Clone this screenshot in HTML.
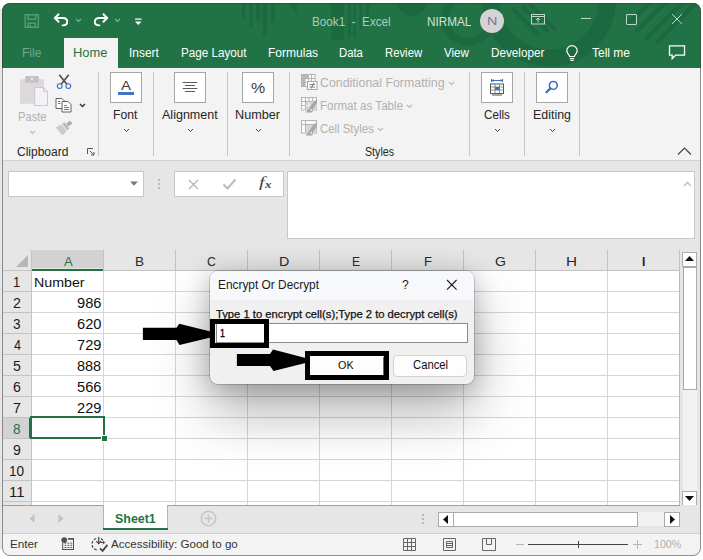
<!DOCTYPE html>
<html lang="en">
<head>
<meta charset="utf-8">
<title>Book1 - Excel</title>
<style>
html,body{margin:0;padding:0;background:#fff;}
body{width:703px;height:560px;position:relative;overflow:hidden;font-family:"Liberation Sans",sans-serif;}
#win{position:absolute;left:2px;top:3px;width:699px;height:552.5px;border-radius:8px;overflow:hidden;background:#e6e6e6;}
#o{position:absolute;left:-2px;top:-3px;width:703px;height:560px;}
#o div,#o svg,#o span{position:absolute;}
.t{white-space:pre;line-height:1;transform-origin:0 0;}
#frame{position:absolute;left:2px;top:3px;width:697px;height:550.5px;border-radius:8px;border:1px solid rgba(60,60,60,.55);pointer-events:none;}
.sep{width:1px;background:#c6c6c6;top:72px;height:84px;}
.bigbtn{width:30px;height:28.5px;top:72px;border:1px solid #a6a6a6;background:#fff;box-sizing:content-box;}
.gl{background:#d4d4d4;}
.hl{background:#c3c3c3;}
</style>
</head>
<body>
<div style="position:absolute;left:0;top:9px;width:3px;height:540px;background:#e6e6e6;"></div>
<div id="win"><div id="o">

<!-- ===== title + tabs ===== -->
<div id="titlebar" style="left:0;top:0;width:703px;height:68px;background:#217346;"></div>
<svg id="titlepattern" style="left:0;top:0;" width="703" height="68" viewBox="0 0 703 68">
 <g fill="#1d693f">
  <rect x="242" y="3" width="3" height="15.500"/><rect x="249.300" y="3" width="3" height="24"/><rect x="256" y="3" width="4" height="18"/><rect x="262.700" y="3" width="4.300" height="32.500"/><rect x="271" y="3" width="4" height="19.700"/>
  <path d="M288 3h9v10z"/>
  <rect x="331" y="3" width="13" height="37"/><rect x="348" y="3" width="3" height="34"/><rect x="353.500" y="3" width="2.500" height="34"/><rect x="359.500" y="3" width="2.800" height="27"/><rect x="366" y="3" width="3.400" height="23"/>
  <circle cx="412" cy="2" r="14"/>
 </g>
 <g fill="none" stroke="#1d693f">
  <circle cx="468" cy="19" r="23" stroke-width="8"/>
  <circle cx="549" cy="-0.500" r="58.500" stroke-width="17"/>
  <path d="M626 26L651 1M636 32L666 2M646 39L685 0M656 43L700 -1" stroke-width="4.500"/><path d="M522 6L548 32M512 8L540 36M530 4L556 30" stroke-width="4"/>
 </g>
</svg>
<div id="hometab" style="left:64px;top:38px;width:53.5px;height:30px;background:#f3f3f3;"></div>

<!-- quick access icons -->
<svg style="left:24px;top:13px;" width="16" height="16" viewBox="0 0 16 16" fill="none" stroke="#559a73" stroke-width="1.500"><path d="M1.2 1.7h13.1v12.6H1.2z"/><path d="M4 1.7v4.6h7.5V1.7"/><path d="M4.3 14.3v-4h7v4M6.5 14.3v-2.2"/></svg>
<svg style="left:53px;top:12px;" width="17" height="16" viewBox="0 0 17 16" fill="none" stroke="#fff" stroke-width="1.9" stroke-linecap="round" stroke-linejoin="round"><path d="M5.6 2.3L1.8 6l3.8 3.7"/><path d="M2.2 6h7.6c2.7 0 4.4 1.6 4.4 3.7 0 2.200-1.700 3.700-4.600 3.700"/></svg>
<svg style="left:91.500px;top:12px;" width="17" height="16" viewBox="0 0 17 16" fill="none" stroke="#fff" stroke-width="1.9" stroke-linecap="round" stroke-linejoin="round"><path d="M11.4 2.3L15.200 6l-3.800 3.700"/><path d="M14.800 6H7.200C4.500 6 2.800 7.600 2.800 9.700c0 2.200 1.700 3.700 4.600 3.700"/></svg>
<svg style="left:75px;top:17.700px;" width="7" height="5" viewBox="0 0 7 5" fill="none" stroke="#7fb396" stroke-width="1.1"><path d="M1 1l2.500 2.500L6 1"/></svg>
<svg style="left:114px;top:17.700px;" width="7" height="5" viewBox="0 0 7 5" fill="none" stroke="#7fb396" stroke-width="1.1"><path d="M1 1l2.500 2.500L6 1"/></svg>
<svg style="left:134px;top:16.500px;" width="9" height="9" viewBox="0 0 9 9" fill="#fff"><rect x="1" y="1.500" width="6.500" height="1.200"/><path d="M1 4.500h6.500L4.250 7.900z"/></svg>

<!-- window controls -->
<div style="left:480px;top:9px;width:24px;height:24px;border-radius:12px;background:#d5d3d6;"></div>
<svg style="left:531px;top:13px;" width="14" height="12" viewBox="0 0 14 12" fill="none" stroke="#bcd8c9" stroke-width="1"><rect x="0.500" y="1.500" width="13" height="9.500"/><path d="M0.500 3.500h13M7 9.500V5.300M5 7l2-2 2 2"/></svg>
<div style="left:581px;top:18px;width:10px;height:1px;background:#bcd8c9;"></div>
<div style="left:626px;top:14px;width:9px;height:9px;border:1px solid #bcd8c9;border-radius:1px;"></div>
<svg style="left:671px;top:13px;" width="12" height="12" viewBox="0 0 12 12" stroke="#bcd8c9" stroke-width="1"><path d="M1 1l10 10M11 1L1 11"/></svg>
<!-- lightbulb -->
<svg style="left:565px;top:45px;" width="14" height="17" viewBox="0 0 14 17" fill="none" stroke="#fff" stroke-width="1.2"><path d="M4.600 11.500c0-1.700-2.800-2.900-2.800-5.700a5.200 5.200 0 0110.400 0c0 2.800-2.800 4-2.800 5.700z"/><path d="M4.800 13.600h4.400M5.300 15.500h3.400"/></svg>
<!-- comment -->
<svg style="left:668px;top:44px;" width="18" height="17" viewBox="0 0 18 17" fill="none" stroke="#fff" stroke-width="1.300"><path d="M1.500 1.800h15v9.400H7.500l-3.300 3.500v-3.500H1.500z"/></svg>

<!-- ===== ribbon ===== -->
<div id="ribbon" style="left:0;top:68px;width:703px;height:92px;background:#f3f3f3;"></div>
<div style="left:0;top:160px;width:703px;height:1px;background:#d2d2d2;"></div>
<div class="sep" style="left:98px;"></div>
<div class="sep" style="left:153px;"></div>
<div class="sep" style="left:227px;"></div>
<div class="sep" style="left:289px;"></div>
<div class="sep" style="left:469px;"></div>
<div class="sep" style="left:524px;"></div>
<div class="sep" style="left:579px;"></div>

<!-- paste -->
<svg style="left:18px;top:75px;" width="32" height="34" viewBox="0 0 32 34"><rect x="2" y="4.300" width="24" height="24.400" rx="1.500" fill="#dcd8dc"/><rect x="7.200" y="1" width="13.700" height="6.800" rx="1" fill="#c4c0c4"/><circle cx="13.900" cy="3.900" r="1.300" fill="#ece9ec"/><path d="M16.700 12.500h8.800l4 4v14h-12.800z" fill="#f5f2f7" stroke="#cbc7cc" stroke-width="1"/><path d="M25.500 12.500v4h4" fill="none" stroke="#cbc7cc" stroke-width="1"/></svg>
<svg style="left:29px;top:130px;" width="7" height="5" viewBox="0 0 7 5" fill="none" stroke="#b9b9b9" stroke-width="1.100"><path d="M1 1l2.500 2.500L6 1"/></svg>
<!-- scissors -->
<svg style="left:56px;top:74px;" width="16" height="16" viewBox="0 0 16 16" fill="none"><path d="M3.300 0.800L11 10.600M12.700 0.800L5 10.600" stroke="#505050" stroke-width="1.600"/><circle cx="3.700" cy="12.100" r="2.400" stroke="#3b6fc0" stroke-width="1.100"/><circle cx="12.300" cy="12.100" r="2.400" stroke="#3b6fc0" stroke-width="1.100"/></svg>
<!-- copy -->
<svg style="left:55px;top:97px;" width="17" height="16" viewBox="0 0 17 16" fill="#fff" stroke="#555" stroke-width="0.900"><path d="M1 1.500h6l2.500 2.500v7.500H1z"/><path d="M7 4.500h6l3 3v7.500H7z"/><path d="M9 8.500h3M9 10.500h5M9 12.500h5M3 4.500h2.500M3 6.500h2.500" stroke="#3b6fc0"/></svg>
<svg style="left:78.500px;top:103px;" width="7" height="5" viewBox="0 0 7 5" fill="none" stroke="#333" stroke-width="1.400"><path d="M1 1l2.500 2.500L6 1"/></svg>
<!-- format painter -->
<svg style="left:56px;top:119px;" width="18" height="16" viewBox="0 0 18 16"><g transform="rotate(-38 9 8)"><rect x="12" y="6" width="5" height="3.800" rx="0.800" fill="#b3afb3"/><rect x="8.800" y="4" width="2.800" height="7.800" fill="#bab6ba"/><path d="M8 3.600v8.600L1.500 13.200V2.600z" fill="#cfcbcf"/></g></svg>
<!-- launcher -->
<svg style="left:87px;top:148px;" width="8" height="8" viewBox="0 0 8 8" fill="none" stroke="#555" stroke-width="1"><path d="M0.500 6V0.500H6"/><path d="M2.800 2.800l4 4M7 4v3H4"/></svg>

<!-- big buttons -->
<div class="bigbtn" style="left:110px;"></div>
<div style="left:118px;top:91.500px;width:16px;height:3.500px;background:#4472c4;"></div>
<div class="bigbtn" style="left:174px;"></div>
<svg style="left:182px;top:81px;" width="16" height="13" viewBox="0 0 16 13" stroke="#5a5a5a" stroke-width="1"><path d="M0.700 1.500h14.600M3 4.500h10M0.700 7.500h14.600M3 10.500h10"/></svg>
<div class="bigbtn" style="left:242px;"></div>
<div class="bigbtn" style="left:481px;"></div>
<div class="bigbtn" style="left:536px;"></div>
<!-- cells icon -->
<svg style="left:489px;top:78px;" width="16" height="18" viewBox="0 0 16 18" fill="none"><path d="M2.500 1v3M13.500 1v3M2.500 2.500h11" stroke="#3b6fc0" stroke-width="1"/><path d="M4.500 1l-2 1.500 2 1.500zM11.500 1l2 1.500-2 1.500z" fill="#3b6fc0"/><rect x="1.500" y="6" width="13" height="9.500" fill="#fff" stroke="#555" stroke-width="1"/><path d="M1.500 9h13M1.500 12h13M6 6v9.500M10.500 6v9.500" stroke="#777" stroke-width="0.800"/><rect x="6" y="9" width="4.500" height="3" fill="#3b6fc0"/><path d="M3 17h10" stroke="#555" stroke-width="1"/></svg>
<!-- magnifier -->
<svg style="left:545px;top:80px;" width="14" height="14" viewBox="0 0 14 14" fill="none" stroke="#3b6fc0"><circle cx="8.300" cy="5.400" r="3.900" stroke-width="1.600"/><path d="M5.400 8.400L1.500 12.300" stroke-width="2.200" stroke-linecap="round"/></svg>
<!-- chevrons under labels -->
<svg style="left:122.500px;top:128px;" width="7" height="5" viewBox="0 0 7 5" fill="none" stroke="#444" stroke-width="1"><path d="M1 1l2.500 2.500L6 1"/></svg>
<svg style="left:186.500px;top:128px;" width="7" height="5" viewBox="0 0 7 5" fill="none" stroke="#444" stroke-width="1"><path d="M1 1l2.500 2.500L6 1"/></svg>
<svg style="left:254.500px;top:128px;" width="7" height="5" viewBox="0 0 7 5" fill="none" stroke="#444" stroke-width="1"><path d="M1 1l2.500 2.500L6 1"/></svg>
<svg style="left:493.500px;top:128px;" width="7" height="5" viewBox="0 0 7 5" fill="none" stroke="#444" stroke-width="1"><path d="M1 1l2.500 2.500L6 1"/></svg>
<svg style="left:548.500px;top:128px;" width="7" height="5" viewBox="0 0 7 5" fill="none" stroke="#444" stroke-width="1"><path d="M1 1l2.500 2.500L6 1"/></svg>
<!-- styles group icons (disabled) -->
<svg style="left:301px;top:74px;" width="17" height="17" viewBox="0 0 17 17" fill="none" stroke="#b4b4b4" stroke-width="1"><rect x="0.500" y="0.500" width="13.500" height="12" fill="#fbfbfb"/><rect x="0.500" y="0.500" width="6.500" height="4.500" fill="#b8b8b8" stroke="none"/><rect x="0.500" y="4.500" width="3.500" height="8" fill="#b8b8b8" stroke="none"/><path d="M0.500 4.500h13.500M0.500 8.500h13.500M4 0.500v12M7.500 0.500v12M10.500 0.500v12"/><rect x="6.500" y="7.500" width="9.500" height="8" fill="#fafafa" stroke="#a6a6a6"/><path d="M8.500 10.500h5.500M8.500 13h5.500M12.800 9l-2.800 5.500" stroke="#808080"/></svg>
<svg style="left:301px;top:97px;" width="17" height="17" viewBox="0 0 17 17" fill="none" stroke="#b4b4b4" stroke-width="1"><rect x="0.500" y="0.500" width="15" height="12.500" fill="#fbfbfb"/><rect x="4.500" y="4.500" width="11" height="8.500" fill="#d8d6d8" stroke="none"/><path d="M0.500 4.500h15M0.500 8.500h4M4.500 0.500v12.500M8 0.500v4M11.500 0.500v4"/><path d="M4.500 8.500h11M8 4.500v8.500M11.500 4.500v8.500" stroke="#efefef"/><path d="M15.900 2.400L16 6 11.800 12.500 11.500 15.500H4.600L8.400 10.500 12.800 4.300z" fill="#aaa7aa" stroke="none"/><circle cx="10.200" cy="12.700" r="1" fill="#e9e9e9" stroke="none"/></svg>
<svg style="left:301px;top:120px;" width="17" height="17" viewBox="0 0 17 17" fill="none" stroke="#b4b4b4" stroke-width="1"><rect x="0.500" y="0.500" width="15" height="12.500" fill="#fbfbfb"/><rect x="4.500" y="4.500" width="11" height="8.500" fill="#d8d6d8" stroke="none"/><path d="M0.500 4.500h15M4.500 0.500v12.500"/><path d="M15.900 2.400L16 6 11.800 12.500 11.500 15.500H4.600L8.400 10.500 12.800 4.300z" fill="#aaa7aa" stroke="none"/><circle cx="10.200" cy="12.700" r="1" fill="#e9e9e9" stroke="none"/></svg>
<svg style="left:447.500px;top:80.500px;" width="7" height="5" viewBox="0 0 7 5" fill="none" stroke="#b9b9b9" stroke-width="1.100"><path d="M1 1l2.500 2.500L6 1"/></svg>
<svg style="left:406px;top:103.500px;" width="7" height="5" viewBox="0 0 7 5" fill="none" stroke="#b9b9b9" stroke-width="1.100"><path d="M1 1l2.500 2.500L6 1"/></svg>
<svg style="left:376.500px;top:126.500px;" width="7" height="5" viewBox="0 0 7 5" fill="none" stroke="#b9b9b9" stroke-width="1.100"><path d="M1 1l2.500 2.500L6 1"/></svg>
<!-- collapse -->
<svg style="left:677px;top:146px;" width="15" height="10" viewBox="0 0 15 10" fill="none" stroke="#444" stroke-width="1.200"><path d="M1 8.500L7.500 2 14 8.500"/></svg>

<!-- ===== formula bar ===== -->
<div style="left:8px;top:171px;width:134px;height:24.400px;background:#fff;border:1px solid #c8c8c8;"></div>
<svg style="left:130px;top:181px;" width="8" height="5" viewBox="0 0 8 5"><path d="M0 0.500h8L4 4.800z" fill="#777"/></svg>
<div style="left:158px;top:179px;width:2px;height:2px;background:#b8b8b8;"></div>
<div style="left:158px;top:183px;width:2px;height:2px;background:#b8b8b8;"></div>
<div style="left:158px;top:187px;width:2px;height:2px;background:#b8b8b8;"></div>
<div style="left:174px;top:171px;width:107.500px;height:24.400px;background:#fff;border:1px solid #c8c8c8;"></div>
<svg style="left:188px;top:179px;" width="11" height="11" viewBox="0 0 11 11" stroke="#b4b4b4" stroke-width="1.300"><path d="M1 1l9 9M10 1l-9 9"/></svg>
<svg style="left:222px;top:178px;" width="15" height="12" viewBox="0 0 15 12" fill="none" stroke="#bcbcbc" stroke-width="2.100"><path d="M1.500 6.500l4 4L13.500 1.500"/></svg>
<div style="left:287px;top:171px;width:405.700px;height:66.300px;background:#fff;border:1px solid #c8c8c8;"></div>
<svg style="left:682.500px;top:180.500px;" width="9" height="6" viewBox="0 0 9 6" fill="none" stroke="#c4c4c4" stroke-width="1.600"><path d="M1 5l3.500-3.500L8 5"/></svg>

<!-- ===== grid ===== -->
<div id="sheet" style="left:31px;top:270px;width:648px;height:235px;background:#fff;"></div>
<div style="left:32px;top:250px;width:71px;height:18px;background:#d2d2d2;"></div>
<div style="left:32px;top:268.6px;width:71px;height:2px;background:#217346;"></div>
<div style="left:31px;top:250px;width:1px;height:20px;background:#c3c3c3;"></div>
<div style="left:103px;top:250px;width:1px;height:20px;background:#c3c3c3;"></div>
<div style="left:175px;top:250px;width:1px;height:20px;background:#c3c3c3;"></div>
<div style="left:247px;top:250px;width:1px;height:20px;background:#c3c3c3;"></div>
<div style="left:319px;top:250px;width:1px;height:20px;background:#c3c3c3;"></div>
<div style="left:391px;top:250px;width:1px;height:20px;background:#c3c3c3;"></div>
<div style="left:463px;top:250px;width:1px;height:20px;background:#c3c3c3;"></div>
<div style="left:535px;top:250px;width:1px;height:20px;background:#c3c3c3;"></div>
<div style="left:607px;top:250px;width:1px;height:20px;background:#c3c3c3;"></div>
<div style="left:679px;top:250px;width:1px;height:20px;background:#c3c3c3;"></div>
<svg style="left:15px;top:254px;" width="14" height="14" viewBox="0 0 14 14"><path d="M13 1v12H1z" fill="#b7b7b7"/></svg>
<div style="left:3px;top:270px;width:28px;height:1px;background:#c3c3c3;"></div>
<div style="left:103px;top:270px;width:576px;height:1px;background:#c3c3c3;"></div>
<div style="left:31px;top:270px;width:1px;height:235px;background:#c3c3c3;"></div>
<div style="left:3px;top:291px;width:28px;height:1px;background:#c3c3c3;"></div>
<div style="left:32px;top:291px;width:647px;height:1px;background:#d6d6d6;"></div>
<div style="left:3px;top:312px;width:28px;height:1px;background:#c3c3c3;"></div>
<div style="left:32px;top:312px;width:647px;height:1px;background:#d6d6d6;"></div>
<div style="left:3px;top:333px;width:28px;height:1px;background:#c3c3c3;"></div>
<div style="left:32px;top:333px;width:647px;height:1px;background:#d6d6d6;"></div>
<div style="left:3px;top:354px;width:28px;height:1px;background:#c3c3c3;"></div>
<div style="left:32px;top:354px;width:647px;height:1px;background:#d6d6d6;"></div>
<div style="left:3px;top:375px;width:28px;height:1px;background:#c3c3c3;"></div>
<div style="left:32px;top:375px;width:647px;height:1px;background:#d6d6d6;"></div>
<div style="left:3px;top:396px;width:28px;height:1px;background:#c3c3c3;"></div>
<div style="left:32px;top:396px;width:647px;height:1px;background:#d6d6d6;"></div>
<div style="left:3px;top:417px;width:28px;height:1px;background:#c3c3c3;"></div>
<div style="left:32px;top:417px;width:647px;height:1px;background:#d6d6d6;"></div>
<div style="left:3px;top:438px;width:28px;height:1px;background:#c3c3c3;"></div>
<div style="left:32px;top:438px;width:647px;height:1px;background:#d6d6d6;"></div>
<div style="left:3px;top:459px;width:28px;height:1px;background:#c3c3c3;"></div>
<div style="left:32px;top:459px;width:647px;height:1px;background:#d6d6d6;"></div>
<div style="left:3px;top:480px;width:28px;height:1px;background:#c3c3c3;"></div>
<div style="left:32px;top:480px;width:647px;height:1px;background:#d6d6d6;"></div>
<div style="left:3px;top:501px;width:28px;height:1px;background:#c3c3c3;"></div>
<div style="left:32px;top:501px;width:647px;height:1px;background:#d6d6d6;"></div>
<div style="left:103px;top:271px;width:1px;height:234px;background:#d6d6d6;"></div>
<div style="left:175px;top:271px;width:1px;height:234px;background:#d6d6d6;"></div>
<div style="left:247px;top:271px;width:1px;height:234px;background:#d6d6d6;"></div>
<div style="left:319px;top:271px;width:1px;height:234px;background:#d6d6d6;"></div>
<div style="left:391px;top:271px;width:1px;height:234px;background:#d6d6d6;"></div>
<div style="left:463px;top:271px;width:1px;height:234px;background:#d6d6d6;"></div>
<div style="left:535px;top:271px;width:1px;height:234px;background:#d6d6d6;"></div>
<div style="left:607px;top:271px;width:1px;height:234px;background:#d6d6d6;"></div>
<div style="left:678.5px;top:270px;width:1px;height:236px;background:#b9b9b9;"></div>
<div style="left:3px;top:418px;width:27px;height:20px;background:#d2d2d2;"></div>
<div style="left:29px;top:418px;width:2px;height:20px;background:#217346;"></div>
<div style="left:30px;top:416px;width:71px;height:19px;border:2px solid #217346;"></div>
<div style="left:100.5px;top:435px;width:5px;height:5px;background:#217346;border:1px solid #fff;"></div>

<!-- scrollbars -->
<div style="left:682px;top:252px;width:13px;height:13px;background:#fff;border:1px solid #ababab;"></div>
<svg style="left:685px;top:256px;" width="9" height="5" viewBox="0 0 9 5"><path d="M0 5h9L4.500 0z" fill="#111"/></svg>
<div style="left:683px;top:267px;width:14px;height:224px;background:#f1f1f1;"></div>
<div style="left:683px;top:267px;width:12px;height:121px;background:#fff;border:1px solid #ababab;"></div>
<div style="left:682px;top:491px;width:13px;height:13px;background:#fff;border:1px solid #ababab;"></div>
<svg style="left:685px;top:496px;" width="9" height="5" viewBox="0 0 9 5"><path d="M0 0h9L4.500 5z" fill="#111"/></svg>

<!-- ===== sheet tab bar ===== -->
<div style="left:0;top:505px;width:703px;height:28px;background:#e6e6e6;"></div>
<div style="left:0;top:505px;width:680px;height:1px;background:#9e9e9e;"></div>
<div style="left:103px;top:505px;width:63px;height:23px;background:#fff;border-left:1px solid #b4b4b4;border-right:1px solid #b4b4b4;"></div>
<div style="left:103px;top:528px;width:65px;height:2px;background:#217346;"></div>
<svg style="left:29px;top:514px;" width="6" height="9" viewBox="0 0 6 9"><path d="M5.500 0v9L0.500 4.500z" fill="#c2c2c2"/></svg>
<svg style="left:58px;top:514px;" width="6" height="9" viewBox="0 0 6 9"><path d="M0.500 0v9L5.500 4.500z" fill="#c2c2c2"/></svg>
<svg style="left:200px;top:510px;" width="17" height="17" viewBox="0 0 17 17" fill="none" stroke="#c6c6c6" stroke-width="1.500"><circle cx="8.500" cy="8.500" r="7.200"/><path d="M8.500 4.500v8M4.500 8.500h8"/></svg>
<div style="left:422px;top:514px;width:2px;height:2px;background:#b8b8b8;"></div>
<div style="left:422px;top:518px;width:2px;height:2px;background:#b8b8b8;"></div>
<div style="left:422px;top:522px;width:2px;height:2px;background:#b8b8b8;"></div>
<div style="left:453px;top:512px;width:212px;height:14px;background:#f1f1f1;"></div>
<div style="left:438px;top:512px;width:14px;height:13px;background:#fff;border:1px solid #ababab;"></div>
<svg style="left:443px;top:515px;" width="5" height="9" viewBox="0 0 5 9"><path d="M5 0v9L0 4.500z" fill="#111"/></svg>
<div style="left:453px;top:512px;width:183px;height:13px;background:#fff;border:1px solid #ababab;"></div>
<div style="left:664px;top:512px;width:14px;height:13px;background:#fff;border:1px solid #ababab;"></div>
<svg style="left:669.500px;top:515px;" width="5" height="9" viewBox="0 0 5 9"><path d="M0 0v9L5 4.500z" fill="#111"/></svg>

<!-- ===== status bar ===== -->
<div style="left:0;top:533px;width:703px;height:27px;background:#f3f3f3;"></div>
<div style="left:0;top:533px;width:703px;height:1px;background:#d0d0d0;"></div>
<svg style="left:61px;top:537px;" width="14" height="14" viewBox="0 0 14 14" fill="#505050"><circle cx="3.200" cy="3.100" r="2.900"/><rect x="7" y="1" width="6" height="1.700"/><rect x="12" y="1" width="1" height="12"/><rect x="1.200" y="6" width="1" height="7"/><rect x="1.200" y="12" width="11.800" height="1"/><rect x="3.500" y="5.600" width="1.800" height="1"/><rect x="6.500" y="5.600" width="1.800" height="1"/><rect x="9.400" y="5.600" width="1.800" height="1"/><rect x="3.500" y="7.800" width="1.800" height="1"/><rect x="6.500" y="7.800" width="1.800" height="1"/><rect x="9.400" y="7.800" width="1.800" height="1"/><rect x="3.500" y="10" width="1.800" height="1"/><rect x="6.500" y="10" width="1.800" height="1"/><rect x="9.400" y="10" width="1.800" height="1"/></svg>
<svg style="left:91px;top:536px;" width="19" height="17" viewBox="0 0 19 17" fill="none" stroke="#444" stroke-width="1.200"><path d="M5.200 2.500A5.800 5.800 0 001 8.200a5.800 5.800 0 005.600 5.800" stroke-dasharray="2.600 1.600"/><path d="M10 2.500a5.800 5.800 0 012.500 3.500" stroke-dasharray="2.600 1.600"/><path d="M7.700 1v6.500M5.300 5.200l2.400 2.400 2.400-2.400"/><path d="M9.500 6.500h4M12 4.800l1.700 1.700L12 8.200" stroke-width="1"/><path d="M9 12.300l2.600 2.600 4.800-6" stroke-width="1.700"/></svg>
<svg style="left:403px;top:538px;" width="13" height="13" viewBox="0 0 13 13" fill="none" stroke="#666" stroke-width="1"><path d="M0.500 0.500h12v12h-12zM0.500 4.500h12M0.500 8.500h12M4.500 0.500v12M8.500 0.500v12"/></svg>
<svg style="left:443px;top:538px;" width="13" height="13" viewBox="0 0 13 13" fill="none" stroke="#666" stroke-width="1"><path d="M0.500 0.500h12v12h-12z"/><path d="M3.500 3.500h6v6h-6zM3.500 5.500h6M3.500 7.500h6"/></svg>
<svg style="left:482px;top:538px;" width="14" height="13" viewBox="0 0 14 13" fill="none" stroke="#666" stroke-width="1"><path d="M0.500 0.500h13v12h-13z"/><path d="M4.500 0.500v6h5v-6"/></svg>
<div style="left:516px;top:544px;width:8px;height:1px;background:#b4b4b4;"></div>
<div style="left:528px;top:544px;width:100px;height:1px;background:#444;"></div>
<div style="left:578px;top:541px;width:1px;height:7px;background:#444;"></div>
<div style="left:633px;top:544px;width:9px;height:1px;background:#b4b4b4;"></div>
<div style="left:637px;top:540px;width:1px;height:9px;background:#b4b4b4;"></div>

<!-- ===== dialog ===== -->
<div id="dialog" style="left:210px;top:270.5px;width:264px;height:113px;border-radius:8px;background:#f0f0f0;box-shadow:0 0 0 1px rgba(0,0,0,.16),0 28px 56px rgba(0,0,0,.30),0 4px 24px rgba(0,0,0,.22);overflow:hidden;"><div style="left:0;top:0;width:264px;height:29.5px;background:#f7f8fb;"></div></div>
<svg style="left:445.5px;top:279px;" width="12" height="12" viewBox="0 0 12 12" stroke="#1a1a1a" stroke-width="1.1"><path d="M1 1l9.6 9.6M10.600 1L1 10.600"/></svg>
<div style="left:216px;top:323.300px;width:249.500px;height:17.500px;background:#fff;border:1px solid #8a8a8a;"></div>
<div style="left:393px;top:354.5px;width:72px;height:20px;background:#fdfdfd;border:1px solid #d0d0d0;border-radius:4px;"></div>
<div style="left:305px;top:351px;width:74px;height:18.500px;background:#fdfdfd;border:5px solid #000;"></div>
<div style="left:382.600px;top:356.500px;width:1.200px;height:18px;background:#2f6fd0;"></div>
<div style="left:210px;top:318.700px;width:49px;height:19.700px;border:5px solid #000;"></div>
<svg style="left:130px;top:310px;" width="190" height="80" viewBox="130 310 190 80"><path d="M142.900 327.800H176.500L179.200 323.700 210.500 331.500V337.500L179.500 345.100 176.500 340H142.900z" fill="#000"/><path d="M236.900 354.100H270L273 349.600 305.500 358V363L273.500 371.100 270 366H236.900z" fill="#000"/></svg>

<span class="t" style="left:312.16px;top:15px;line-height:14px;font-size:12.5px;color:#a9cdb9;transform:scaleX(0.9362);">Book1  -  Excel</span>
<span class="t" style="left:426.76px;top:15px;line-height:14px;font-size:12.5px;color:#cfe3d8;transform:scaleX(0.9377);">NIRMAL</span>
<span class="t" style="left:486.52px;top:15px;line-height:12px;font-size:11.2px;color:#77789a;transform:scaleX(1.2800);">N</span>
<span class="t" style="left:22.24px;top:46px;line-height:14px;font-size:12.5px;color:#72a98a;transform:scaleX(0.9622);">File</span>
<span class="t" style="left:73.17px;top:46px;line-height:14px;font-size:12.5px;color:#217346;transform:scaleX(1.0331);">Home</span>
<span class="t" style="left:128.81px;top:46px;line-height:14px;font-size:12.5px;color:#fff;transform:scaleX(0.9533);">Insert</span>
<span class="t" style="left:180.57px;top:46px;line-height:14px;font-size:12.5px;color:#fff;transform:scaleX(0.9314);">Page Layout</span>
<span class="t" style="left:267.64px;top:46px;line-height:14px;font-size:12.5px;color:#fff;transform:scaleX(0.9624);">Formulas</span>
<span class="t" style="left:338.79px;top:46px;line-height:14px;font-size:12.5px;color:#fff;transform:scaleX(0.9059);">Data</span>
<span class="t" style="left:384.60px;top:46px;line-height:14px;font-size:12.5px;color:#fff;transform:scaleX(0.9050);">Review</span>
<span class="t" style="left:444.17px;top:46px;line-height:14px;font-size:12.5px;color:#fff;transform:scaleX(0.9283);">View</span>
<span class="t" style="left:490.76px;top:46px;line-height:14px;font-size:12.5px;color:#fff;transform:scaleX(0.9381);">Developer</span>
<span class="t" style="left:592.36px;top:46px;line-height:14px;font-size:12.5px;color:#fff;transform:scaleX(0.9574);">Tell me</span>
<span class="t" style="left:17.91px;top:110px;line-height:14px;font-size:12.5px;color:#b1b1b1;transform:scaleX(0.8918);">Paste</span>
<span class="t" style="left:17.00px;top:145px;line-height:14px;font-size:12px;color:#262626;transform:scaleX(1.0000);">Clipboard</span>
<span class="t" style="left:121.30px;top:78px;line-height:15px;font-size:13.6px;color:#3a3a3a;transform:scaleX(1.1000);">A</span>
<span class="t" style="left:113.33px;top:108px;line-height:14px;font-size:12.5px;color:#262626;transform:scaleX(0.9750);">Font</span>
<span class="t" style="left:162.40px;top:108px;line-height:14px;font-size:12.5px;color:#262626;transform:scaleX(1.0018);">Alignment</span>
<span class="t" style="left:251.47px;top:79px;line-height:17px;font-size:15px;color:#3a3a3a;transform:scaleX(1.0612);">%</span>
<span class="t" style="left:235.39px;top:108px;line-height:14px;font-size:12.5px;color:#262626;transform:scaleX(1.0127);">Number</span>
<span class="t" style="left:319.86px;top:76px;line-height:14px;font-size:12.5px;color:#b1b1b1;transform:scaleX(0.9907);">Conditional Formatting</span>
<span class="t" style="left:319.67px;top:99px;line-height:14px;font-size:12.5px;color:#b1b1b1;transform:scaleX(0.9299);">Format as Table</span>
<span class="t" style="left:319.92px;top:122px;line-height:14px;font-size:12.5px;color:#b1b1b1;transform:scaleX(0.9108);">Cell Styles</span>
<span class="t" style="left:365.06px;top:145px;line-height:14px;font-size:12px;color:#262626;transform:scaleX(0.8882);">Styles</span>
<span class="t" style="left:483.60px;top:108px;line-height:14px;font-size:12.5px;color:#262626;transform:scaleX(0.9321);">Cells</span>
<span class="t" style="left:532.71px;top:108px;line-height:14px;font-size:12.5px;color:#262626;transform:scaleX(0.9945);">Editing</span>
<span class="t" style="left:258.96px;top:174px;line-height:16px;font-size:15px;color:#444;transform:scaleX(1.3636);font-style:italic;font-family:'Liberation Serif',serif;">f</span>
<span class="t" style="left:264.90px;top:179px;line-height:11px;font-size:10.5px;color:#444;transform:scaleX(1.2200);font-weight:bold;font-style:italic;font-family:'Liberation Serif',serif;">x</span>
<span class="t" style="left:63.60px;top:254px;line-height:15px;font-size:13.3px;color:#217346;transform:scaleX(0.9829);">A</span>
<span class="t" style="left:135.18px;top:254px;line-height:15px;font-size:13.3px;color:#262626;transform:scaleX(1.0207);">B</span>
<span class="t" style="left:207.41px;top:254px;line-height:15px;font-size:13.3px;color:#262626;transform:scaleX(0.9212);">C</span>
<span class="t" style="left:278.52px;top:254px;line-height:15px;font-size:13.3px;color:#262626;transform:scaleX(1.0750);">D</span>
<span class="t" style="left:351.69px;top:254px;line-height:15px;font-size:13.3px;color:#262626;transform:scaleX(0.9103);">E</span>
<span class="t" style="left:423.72px;top:254px;line-height:15px;font-size:13.3px;color:#262626;transform:scaleX(0.9846);">F</span>
<span class="t" style="left:494.61px;top:254px;line-height:15px;font-size:13.3px;color:#262626;transform:scaleX(1.0588);">G</span>
<span class="t" style="left:566.45px;top:254px;line-height:15px;font-size:13.3px;color:#262626;transform:scaleX(1.1467);">H</span>
<span class="t" style="left:641.20px;top:254px;line-height:15px;font-size:13.3px;color:#262626;transform:scaleX(1.4400);">I</span>
<span class="t" style="left:13.27px;top:275px;line-height:15px;font-size:13.8px;color:#1a1a1a;transform:scaleX(0.9333);">1</span>
<span class="t" style="left:13.03px;top:296px;line-height:15px;font-size:13.8px;color:#1a1a1a;transform:scaleX(1.0240);">2</span>
<span class="t" style="left:13.31px;top:317px;line-height:15px;font-size:13.8px;color:#1a1a1a;transform:scaleX(0.9846);">3</span>
<span class="t" style="left:13.57px;top:338px;line-height:15px;font-size:13.8px;color:#1a1a1a;transform:scaleX(0.9143);">4</span>
<span class="t" style="left:13.03px;top:359px;line-height:15px;font-size:13.8px;color:#1a1a1a;transform:scaleX(1.0240);">5</span>
<span class="t" style="left:13.03px;top:380px;line-height:15px;font-size:13.8px;color:#1a1a1a;transform:scaleX(1.0240);">6</span>
<span class="t" style="left:13.03px;top:401px;line-height:15px;font-size:13.8px;color:#1a1a1a;transform:scaleX(1.0240);">7</span>
<span class="t" style="left:13.31px;top:422px;line-height:15px;font-size:13.8px;color:#217346;transform:scaleX(0.9846);">8</span>
<span class="t" style="left:13.03px;top:443px;line-height:15px;font-size:13.8px;color:#1a1a1a;transform:scaleX(1.0240);">9</span>
<span class="t" style="left:9.27px;top:464px;line-height:15px;font-size:13.8px;color:#1a1a1a;transform:scaleX(0.9818);">10</span>
<span class="t" style="left:9.17px;top:485px;line-height:15px;font-size:13.8px;color:#1a1a1a;transform:scaleX(1.0800);">11</span>
<span class="t" style="left:33.73px;top:275px;line-height:15px;font-size:13.3px;color:#111;transform:scaleX(1.0696);">Number</span>
<span class="t" style="left:76.80px;top:296px;line-height:15px;font-size:13.8px;color:#111;transform:scaleX(1.0621);">986</span>
<span class="t" style="left:76.80px;top:317px;line-height:15px;font-size:13.8px;color:#111;transform:scaleX(1.0621);">620</span>
<span class="t" style="left:76.80px;top:338px;line-height:15px;font-size:13.8px;color:#111;transform:scaleX(1.0621);">729</span>
<span class="t" style="left:77.07px;top:359px;line-height:15px;font-size:13.8px;color:#111;transform:scaleX(1.0500);">888</span>
<span class="t" style="left:76.80px;top:380px;line-height:15px;font-size:13.8px;color:#111;transform:scaleX(1.0621);">566</span>
<span class="t" style="left:76.80px;top:401px;line-height:15px;font-size:13.8px;color:#111;transform:scaleX(1.0621);">229</span>
<span class="t" style="left:217.85px;top:278px;line-height:14px;font-size:12.5px;color:#1a1a1a;transform:scaleX(0.9501);">Encrypt Or Decrypt</span>
<span class="t" style="left:402.32px;top:278px;line-height:14px;font-size:12.5px;color:#1a1a1a;transform:scaleX(0.9667);">?</span>
<span class="t" style="left:215.93px;top:308px;line-height:12px;font-size:10.5px;color:#111;transform:scaleX(1.0693);-webkit-text-stroke:0.25px #111;">Type 1 to encrypt cell(s);Type 2 to decrypt cell(s)</span>
<span class="t" style="left:220.37px;top:327px;line-height:12px;font-size:10.5px;color:#000;transform:scaleX(0.8444);-webkit-text-stroke:0.3px #000;">1</span>
<span class="t" style="left:337.83px;top:359px;line-height:12px;font-size:11.5px;color:#111;transform:scaleX(0.9375);">OK</span>
<span class="t" style="left:412.73px;top:358px;line-height:14px;font-size:12px;color:#111;transform:scaleX(0.9389);">Cancel</span>
<span class="t" style="left:114.92px;top:511px;line-height:15px;font-size:13px;color:#217346;transform:scaleX(0.9557);font-weight:bold;">Sheet1</span>
<span class="t" style="left:10.23px;top:538px;line-height:12px;font-size:11px;color:#333;transform:scaleX(1.0653);">Enter</span>
<span class="t" style="left:111.00px;top:538px;line-height:12px;font-size:11px;color:#333;transform:scaleX(1.0525);">Accessibility: Good to go</span>
<span class="t" style="left:654.07px;top:538px;line-height:12px;font-size:11px;color:#b0b0b0;transform:scaleX(0.9704);">100%</span>
</div></div>
<div id="frame"></div>
</body>
</html>
